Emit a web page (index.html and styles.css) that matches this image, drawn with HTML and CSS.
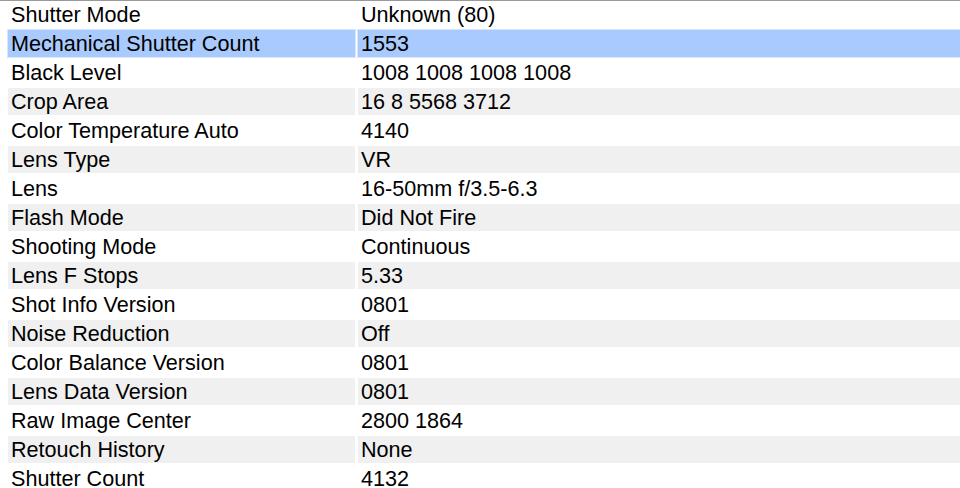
FILE: index.html
```html
<!DOCTYPE html>
<html>
<head>
    <meta charset="UTF-8">
    <link rel="stylesheet" href="styles.css">
</head>

<body>
    <div class="props">
        <div class="row"><div class="key">Shutter Mode</div><div class="val">Unknown (80)</div></div>
        <div class="row selected"><div class="key">Mechanical Shutter Count</div><div class="val">1553</div></div>
        <div class="row"><div class="key">Black Level</div><div class="val">1008 1008 1008 1008</div></div>
        <div class="row"><div class="key">Crop Area</div><div class="val">16 8 5568 3712</div></div>
        <div class="row"><div class="key">Color Temperature Auto</div><div class="val">4140</div></div>
        <div class="row"><div class="key">Lens Type</div><div class="val">VR</div></div>
        <div class="row"><div class="key">Lens</div><div class="val">16-50mm f/3.5-6.3</div></div>
        <div class="row"><div class="key">Flash Mode</div><div class="val">Did Not Fire</div></div>
        <div class="row"><div class="key">Shooting Mode</div><div class="val">Continuous</div></div>
        <div class="row"><div class="key">Lens F Stops</div><div class="val">5.33</div></div>
        <div class="row"><div class="key">Shot Info Version</div><div class="val">0801</div></div>
        <div class="row"><div class="key">Noise Reduction</div><div class="val">Off</div></div>
        <div class="row"><div class="key">Color Balance Version</div><div class="val">0801</div></div>
        <div class="row"><div class="key">Lens Data Version</div><div class="val">0801</div></div>
        <div class="row"><div class="key">Raw Image Center</div><div class="val">2800 1864</div></div>
        <div class="row"><div class="key">Retouch History</div><div class="val">None</div></div>
        <div class="row"><div class="key">Shutter Count</div><div class="val">4132</div></div>
    </div>
</body>
</html>
```

FILE: styles.css
```css
body {
    margin: 0;
    overflow: hidden;
    font-family: "Liberation Sans", Arial, sans-serif;
    font-size: 21.6px;
    color: #000;
    background: #fff;
}

.props {
    display: flex;
    flex-direction: column;
    gap: 2px;
    border-top: 1px solid #9a9a9a;
}

.row {
    display: grid;
    grid-template-columns: 347px 1fr;
    column-gap: 3px;
    margin-left: 8px;
}

.row .key,
.row .val {
    height: 27px;
    line-height: 28px;
    padding-left: 3px;
    white-space: nowrap;
}

.row:nth-child(even) .key,
.row:nth-child(even) .val {
    background: #f0f0f0;
}

.row.selected .key,
.row.selected .val {
    background: #a9cafc;
    box-shadow: 0 0 0 1px #d6e6fe;
}
```
